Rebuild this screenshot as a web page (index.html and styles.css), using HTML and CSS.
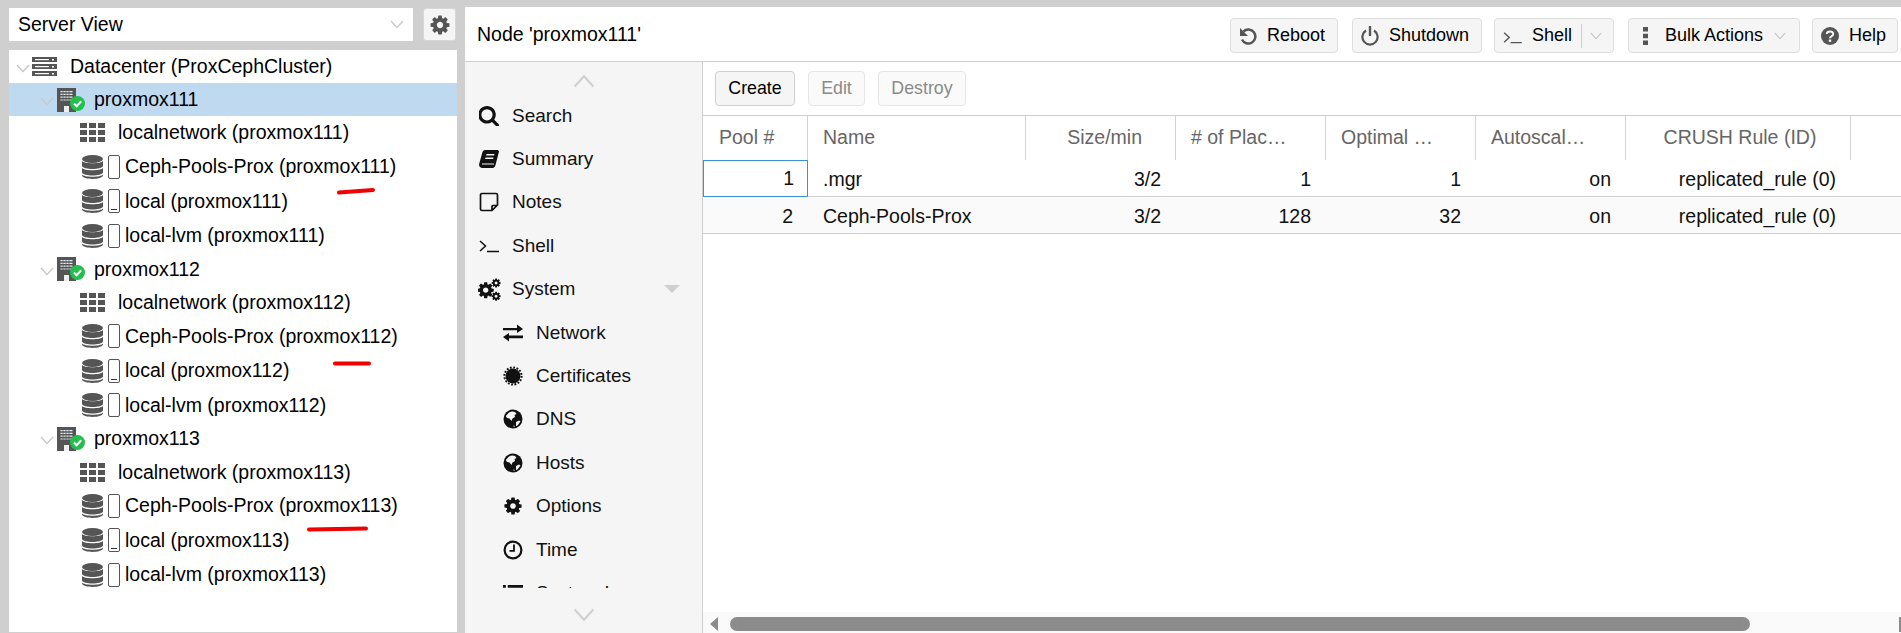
FILE: index.html
```html
<!DOCTYPE html>
<html lang="en">
<head>
<meta charset="utf-8">
<title>Proxmox - Ceph Pools</title>
<link rel="stylesheet" href="styles.css">
</head>
<body>
<svg class="defs" width="0" height="0" aria-hidden="true">
  <symbol id="i-chev" viewBox="0 0 14 9"><path d="M1 1l6 6.5L13 1" fill="none" stroke="currentColor" stroke-width="1.3"/></symbol>
  <symbol id="i-gear" viewBox="0 0 1792 1792"><path fill="currentColor" d="M1152 896q0-106-75-181t-181-75-181 75-75 181 75 181 181 75 181-75 75-181zm512-109v222q0 12-8 23t-20 13l-185 28q-19 54-39 91 35 50 107 138 10 12 10 25t-9 23q-27 37-99 108t-94 71q-12 0-26-9l-138-108q-44 23-91 38-16 136-29 186-7 28-36 28h-222q-14 0-24.5-8.5t-11.5-21.5l-28-184q-49-16-90-37l-141 107q-10 9-25 9-14 0-25-11-126-114-165-168-7-10-7-23 0-12 8-23 15-21 51-66.5t54-70.5q-27-50-41-99l-183-27q-13-2-21-12.5t-8-23.5v-222q0-12 8-23t19-13l186-28q14-46 39-92-40-57-107-138-10-12-10-24 0-10 9-23 26-36 98.5-107.5t94.5-71.5q13 0 26 10l138 107q44-23 91-38 16-136 29-186 7-28 36-28h222q14 0 24.5 8.5t11.5 21.5l28 184q49 16 90 37l142-107q9-9 24-9 13 0 25 10 129 119 165 170 7 8 7 22 0 12-8 23-15 21-51 66.5t-54 70.5q26 50 41 98l183 28q13 2 21 12.5t8 23.5z"/></symbol>
  <symbol id="i-search" viewBox="128 128 1600 1600"><path fill="currentColor" d="M1216 832q0-185-131.5-316.5t-316.5-131.5-316.5 131.5-131.5 316.5 131.5 316.5 316.5 131.5 316.5-131.5 131.5-316.5zm512 832q0 52-38 90t-90 38q-54 0-90-38l-343-342q-179 124-399 124-143 0-273.5-55.5t-225-150-150-225-55.5-273.5 55.5-273.5 150-225 225-150 273.5-55.5 273.5 55.5 225 150 150 225 55.5 273.5q0 220-124 399l343 343q37 37 37 90z"/></symbol>
  <symbol id="i-dc" viewBox="0 0 25 19">
    <rect x="0" y="0" width="25" height="5" fill="#555"/><rect x="0" y="7" width="25" height="5" fill="#555"/><rect x="0" y="14" width="25" height="5" fill="#555"/>
    <rect x="3" y="2" width="14" height="1.2" fill="#fff"/><rect x="3" y="9" width="14" height="1.2" fill="#fff"/><rect x="3" y="16" width="14" height="1.2" fill="#fff"/>
    <rect x="20" y="2" width="2" height="1.5" fill="#fff"/><rect x="20" y="9" width="2" height="1.5" fill="#fff"/><rect x="20" y="16" width="2" height="1.5" fill="#fff"/>
  </symbol>
  <symbol id="i-node" viewBox="0 0 28 24">
    <rect x="0" y="0" width="19" height="24" fill="#555"/>
    <path d="M3.500 3h12v1.200h-12zM3.500 5.800h12V7h-12zM3.500 8.600h12v1.200h-12zM3.500 11.400h12v1.200h-12z" fill="#e2ebf3"/>
    <path d="M6 2.500v11M9 2.500v11M12 2.500v11" stroke="#555" stroke-width=".7"/>
    <rect x="7" y="18" width="5" height="6" fill="#eee"/>
    <circle cx="20.500" cy="15.500" r="7.500" fill="#21bf4b"/>
    <path d="M17 15.500l2.600 2.700 4.600-5" fill="none" stroke="#fff" stroke-width="2"/>
  </symbol>
  <symbol id="i-grid" viewBox="0 0 25 19">
    <path fill="#555" d="M0 0h7v5H0zM9 0h7v5H9zM18 0h7v5h-7zM0 7h7v5H0zM9 7h7v5H9zM18 7h7v5h-7zM0 14h7v5H0zM9 14h7v5H9zM18 14h7v5h-7z"/>
  </symbol>
  <symbol id="i-db" viewBox="0 0 21 24">
    <ellipse cx="10.500" cy="4" rx="10.500" ry="4" fill="#555"/>
    <path fill="#555" d="M0 6c2 3 19 3 21 0v5c-1 4-20 4-21 0zM0 13c2 3 19 3 21 0v4.500c-1 4-20 4-21 0zM0 19.500c2 3 19 3 21 0v1c-1 4.500-20 4.500-21 0z"/>
  </symbol>
  <symbol id="i-book" viewBox="0 0 20 20"><path fill="currentColor" d="M6 1h13l1 1.500L16.500 16c-.3 1.500-1.200 3-3 3H3.500C1.500 19 0 17.500 0 15.500L3.500 3C4 1.800 5 1 6 1zM7.500 5l-.4 1.500h8l.4-1.500zM6.500 8.500l-.4 1.500h8l.4-1.500z"/><path d="M3 15h12" stroke="#f5f5f5" stroke-width="1"/></symbol>
  <symbol id="i-note" viewBox="0 0 20 20"><path d="M3 1.500h14a1.500 1.500 0 0 1 1.500 1.500v10l-5.500 5.500H3A1.500 1.500 0 0 1 1.500 17V3A1.500 1.500 0 0 1 3 1.500zM13 18.500v-4a1 1 0 0 1 1-1h4.500" fill="none" stroke="currentColor" stroke-width="1.700"/></symbol>
  <symbol id="i-shell" viewBox="0 0 20 14"><path d="M1 2l5.500 5L1 12M8 12.500h12" fill="none" stroke="currentColor" stroke-width="1.500"/></symbol>
  <symbol id="i-gears" viewBox="0 0 1792 1792"><use href="#i-gear" x="-130" y="220" width="1460" height="1460"/><use href="#i-gear" x="1000" y="-20" width="820" height="820"/><use href="#i-gear" x="1000" y="1010" width="820" height="820"/></symbol>
  <symbol id="i-net" viewBox="0 0 20 17"><path fill="currentColor" d="M0 3.500h14V0l6 4.500L14 8.500V5.700H0zM20 11H6V8.500L0 12.500 6 17v-3.300h14z"/></symbol>
  <symbol id="i-cert" viewBox="0 0 20 20"><circle cx="10" cy="10" r="7.500" fill="currentColor"/><circle cx="10" cy="10" r="8.600" fill="none" stroke="currentColor" stroke-width="2" stroke-dasharray="1.800 1.577"/></symbol>
  <symbol id="i-globe" viewBox="0 0 20 20"><circle cx="10" cy="10" r="9.500" fill="currentColor"/><path fill="#f5f5f5" d="M6 3.500c2-1.200 4-1.300 6-.5l1.500 2-2 1 .5 2-2.500 1.500-1 2.500-2-2.500-2.500-.5L2.800 7zM13 13l3-1.500 1.500 1-3 4-1.500.5zM10 16.500l2 .5-1 1z"/></symbol>
  <symbol id="i-clock" viewBox="0 0 20 20"><circle cx="10" cy="10" r="8.400" fill="none" stroke="currentColor" stroke-width="2.200"/><path d="M11 4.500v6.300H6.500" fill="none" stroke="currentColor" stroke-width="1.800"/></symbol>
  <symbol id="i-list" viewBox="0 0 21 17"><path fill="currentColor" d="M0 0h3v3H0zM5 0h16v3H5zM0 6h3v3H0zM5 6h16v3H5zM0 12h3v3H0zM5 12h16v3H5z"/></symbol>
  <symbol id="i-undo" viewBox="0 0 18 18"><path d="M4.500 4.500A7 7 0 1 1 3 12.500" fill="none" stroke="currentColor" stroke-width="2.500"/><path d="M1 1v8h8z" fill="currentColor"/></symbol>
  <symbol id="i-power" viewBox="0 0 18 20"><path d="M5 4.500a7.600 7.600 0 1 0 8 0" fill="none" stroke="currentColor" stroke-width="2.200"/><path d="M9 0v10" stroke="currentColor" stroke-width="2.400"/></symbol>
  <symbol id="i-dots" viewBox="0 0 5 18"><path fill="currentColor" d="M0 0h5v4.500H0zM0 6.800h5v4.500H0zM0 13.500h5V18H0z"/></symbol>
  <symbol id="i-help" viewBox="0 0 18 18"><circle cx="9" cy="9" r="9" fill="currentColor"/><path d="M5.800 7c.2-3.400 6.400-3.400 6.400 0 0 2.300-3.200 2.200-3.200 4.300" fill="none" stroke="#f5f5f5" stroke-width="2"/><rect x="7.800" y="12.500" width="2.400" height="2.400" fill="#f5f5f5"/></symbol>
</svg>

<div class="app">
  <aside class="left">
    <div class="left-top">
      <div class="view-select">
        <span>Server View</span>
        <svg class="chev sel-chev"><use href="#i-chev"/></svg>
      </div>
      <button class="gear-btn" type="button" aria-label="Settings"><svg class="gear-icon"><use href="#i-gear"/></svg></button>
    </div>
    <div class="tree">
      <div class="row lv0"><svg class="chev"><use href="#i-chev"/></svg><svg class="ic-dc"><use href="#i-dc"/></svg><span>Datacenter (ProxCephCluster)</span></div>

      <div class="row lv1 selected"><svg class="chev"><use href="#i-chev"/></svg><svg class="ic-node"><use href="#i-node"/></svg><span>proxmox111</span></div>
      <div class="row lv2"><svg class="ic-grid"><use href="#i-grid"/></svg><span>localnetwork (proxmox111)</span></div>
      <div class="row lv2 st"><svg class="ic-db"><use href="#i-db"/></svg><i class="tofu"></i><span>Ceph-Pools-Prox (proxmox111)</span></div>
      <div class="row lv2 st"><svg class="ic-db"><use href="#i-db"/></svg><i class="tofu"><b></b></i><span>local (proxmox111)</span></div>
      <div class="row lv2 st"><svg class="ic-db"><use href="#i-db"/></svg><i class="tofu"></i><span>local-lvm (proxmox111)</span></div>

      <div class="row lv1"><svg class="chev"><use href="#i-chev"/></svg><svg class="ic-node"><use href="#i-node"/></svg><span>proxmox112</span></div>
      <div class="row lv2"><svg class="ic-grid"><use href="#i-grid"/></svg><span>localnetwork (proxmox112)</span></div>
      <div class="row lv2 st"><svg class="ic-db"><use href="#i-db"/></svg><i class="tofu"></i><span>Ceph-Pools-Prox (proxmox112)</span></div>
      <div class="row lv2 st"><svg class="ic-db"><use href="#i-db"/></svg><i class="tofu"><b></b></i><span>local (proxmox112)</span></div>
      <div class="row lv2 st"><svg class="ic-db"><use href="#i-db"/></svg><i class="tofu"></i><span>local-lvm (proxmox112)</span></div>

      <div class="row lv1"><svg class="chev"><use href="#i-chev"/></svg><svg class="ic-node"><use href="#i-node"/></svg><span>proxmox113</span></div>
      <div class="row lv2"><svg class="ic-grid"><use href="#i-grid"/></svg><span>localnetwork (proxmox113)</span></div>
      <div class="row lv2 st"><svg class="ic-db"><use href="#i-db"/></svg><i class="tofu"></i><span>Ceph-Pools-Prox (proxmox113)</span></div>
      <div class="row lv2 st"><svg class="ic-db"><use href="#i-db"/></svg><i class="tofu"><b></b></i><span>local (proxmox113)</span></div>
      <div class="row lv2 st"><svg class="ic-db"><use href="#i-db"/></svg><i class="tofu"></i><span>local-lvm (proxmox113)</span></div>
    </div>
  </aside>

  <main class="main">
    <header class="head">
      <div class="title">Node 'proxmox111'</div>
      <div class="actions">
        <button class="btn w-reboot" type="button"><svg class="b-ic"><use href="#i-undo"/></svg>Reboot</button>
        <button class="btn w-shut" type="button"><svg class="b-ic b-power"><use href="#i-power"/></svg>Shutdown</button>
        <button class="btn w-shell" type="button"><svg class="b-ic-w"><use href="#i-shell"/></svg>Shell<i class="split"></i><svg class="chev b-chev"><use href="#i-chev"/></svg></button>
        <button class="btn w-bulk" type="button"><svg class="b-dots"><use href="#i-dots"/></svg>Bulk Actions<svg class="chev b-chev"><use href="#i-chev"/></svg></button>
        <button class="btn w-help" type="button"><svg class="b-ic"><use href="#i-help"/></svg>Help</button>
      </div>
    </header>

    <div class="body">
      <nav class="nav">
        <div class="nav-arrow up"><svg class="big-chev"><use href="#i-chev"/></svg></div>
        <div class="nav-list">
          <div class="nav-item"><svg class="n-ic"><use href="#i-search"/></svg>Search</div>
          <div class="nav-item"><svg class="n-ic"><use href="#i-book"/></svg>Summary</div>
          <div class="nav-item"><svg class="n-ic"><use href="#i-note"/></svg>Notes</div>
          <div class="nav-item"><svg class="n-ic shell-ic"><use href="#i-shell"/></svg>Shell</div>
          <div class="nav-item"><svg class="n-ic gears-ic"><use href="#i-gears"/></svg>System<i class="caret"></i></div>
          <div class="nav-item sub"><svg class="n-ic"><use href="#i-net"/></svg>Network</div>
          <div class="nav-item sub"><svg class="n-ic"><use href="#i-cert"/></svg>Certificates</div>
          <div class="nav-item sub"><svg class="n-ic"><use href="#i-globe"/></svg>DNS</div>
          <div class="nav-item sub"><svg class="n-ic"><use href="#i-globe"/></svg>Hosts</div>
          <div class="nav-item sub"><svg class="n-ic"><use href="#i-gear"/></svg>Options</div>
          <div class="nav-item sub"><svg class="n-ic"><use href="#i-clock"/></svg>Time</div>
          <div class="nav-item sub"><svg class="n-ic"><use href="#i-list"/></svg>System Log</div>
        </div>
        <div class="nav-arrow down"><svg class="big-chev"><use href="#i-chev"/></svg></div>
      </nav>

      <section class="content">
        <div class="toolbar">
          <button class="tbtn w-create" type="button">Create</button>
          <button class="tbtn off w-edit" type="button">Edit</button>
          <button class="tbtn off w-destroy" type="button">Destroy</button>
        </div>
        <div class="grid-head cols">
          <div class="hc">Pool #</div>
          <div class="hc">Name</div>
          <div class="hc hc-size">Size/min</div>
          <div class="hc">#&nbsp;of&nbsp;Plac…</div>
          <div class="hc">Optimal&nbsp;…</div>
          <div class="hc">Autoscal…</div>
          <div class="hc hc-center">CRUSH Rule (ID)</div>
          <div class="hc"></div>
        </div>
        <div class="grid-row cols">
          <div class="c r focus">1</div><div class="c">.mgr</div><div class="c r">3/2</div><div class="c r">1</div><div class="c r">1</div><div class="c r">on</div><div class="c r">replicated_rule (0)</div><div class="c"></div>
        </div>
        <div class="grid-row alt cols">
          <div class="c r">2</div><div class="c">Ceph-Pools-Prox</div><div class="c r">3/2</div><div class="c r">128</div><div class="c r">32</div><div class="c r">on</div><div class="c r">replicated_rule (0)</div><div class="c"></div>
        </div>
        <div class="grid-fill"></div>
        <div class="hscroll">
          <i class="arrow-l"></i>
          <div class="thumb"></div>
          <i class="arrow-r"></i>
        </div>
      </section>
    </div>
  </main>
</div>

<svg class="marks" width="1901" height="633" aria-hidden="true">
  <path d="M339 192.500L373 190" />
  <path d="M335 363.500H369" />
  <path d="M309 529.500L366 528.500" />
</svg>
</body>
</html>
```
FILE: styles.css
```css
* { box-sizing: border-box; }
html, body { margin: 0; height: 100%; }
body {
  position: relative;
  height: 633px;
  overflow: hidden;
  background: #cfcfcf;
  color: #000;
  font-family: "Liberation Sans", Arial, sans-serif;
  font-size: 19.5px;
}
svg { display: block; flex: none; }
.defs { position: absolute; }
button { font: inherit; color: inherit; margin: 0; cursor: default; }

.app { display: flex; height: 633px; }

/* left column */
.left { width: 465px; flex: none; padding: 8px 8px 0 9px; display: flex; flex-direction: column; }
.left-top { display: flex; height: 33px; padding-right: 1px; }
.view-select {
  width: 404px; background: #fff; display: flex; align-items: center;
  padding: 0 9px 0 9px; justify-content: space-between;
}
.chev { width: 14px; height: 9px; color: #c8c8c8; }
.sel-chev { margin-top: -1px; }
.gear-btn {
  margin-left: 10px; width: 33px; height: 33px; padding: 0;
  background: #f5f5f5; border: 1px solid #d8d8d8; border-radius: 3px;
  display: flex; align-items: center; justify-content: center;
}
.gear-icon { width: 22px; height: 22px; color: #555; }

.tree { margin-top: 9px; height: 582px; background: #fff; }
.row { display: flex; align-items: center; height: 33.2px; white-space: nowrap; }
.row.st { height: 34.4px; }
.selected { background: #bfdaf0; }
.lv0 { padding-left: 7px; }
.lv0 .chev { margin-top: 4px; }
.ic-dc { width: 25px; height: 19px; margin: 0 13px 0 2px; }
.lv1 { padding-left: 31px; }
.lv1 .chev { margin-top: 4px; }
.ic-node { width: 28px; height: 24px; margin: 0 9px 0 3px; }
.lv2 { padding-left: 71px; }
.ic-grid { width: 25px; height: 19px; margin-right: 13px; }
.ic-db { width: 21px; height: 24px; margin: 0 5px 0 2px; }
.tofu {
  position: relative; flex: none; width: 12px; height: 24px; margin-right: 5px;
  border: 1px solid #555; border-radius: 2px; background: #fff;
}
.tofu b { position: absolute; left: 2px; right: 2px; bottom: 2px; height: 1px; background: #333; }

/* main panel */
.main { flex: 1; min-width: 0; margin-top: 7px; background: #fff; display: flex; flex-direction: column; }
.head {
  height: 55px; flex: none; display: flex; align-items: center; justify-content: space-between;
  padding: 0 3px 0 12px; border-bottom: 1px solid #cfcfcf;
}
.actions { display: flex; margin-top: 3px; }
.btn {
  height: 35px; padding: 0 0 0 8px; display: flex; align-items: center; white-space: nowrap;
  background: #f5f5f5; border: 1px solid #dedede; border-radius: 4px; font-size: 18px;
}
.w-reboot { width: 108px; }
.w-shut { width: 130px; margin-left: 14px; }
.w-shell { width: 120px; margin-left: 12px; }
.w-bulk { width: 172px; margin-left: 14px; padding-left: 14px; }
.w-help { width: 86px; margin-left: 12px; }
.b-ic { width: 18px; height: 18px; margin-right: 10px; color: #555; }
.b-power { height: 20px; }
.b-ic-w { width: 19px; height: 13px; margin-right: 10px; color: #555; margin-top: 3px; }
.b-dots { width: 5px; height: 18px; margin-right: 17px; color: #555; }
.b-chev { width: 12px; height: 8px; margin-left: 11px; color: #c8c8c8; }
.split { width: 1px; height: 24px; background: #d0d0d0; margin-left: 9px; }
.split + .b-chev { margin-left: 8px; }

.body { flex: 1; min-height: 0; display: flex; }
.nav {
  width: 238px; flex: none; background: #f5f5f5; border-right: 1px solid #cfcfcf;
  display: flex; flex-direction: column;
}
.nav-arrow { flex: none; display: flex; justify-content: center; }
.up { height: 32px; padding-top: 12px; }
.up .big-chev { transform: scaleY(-1); }
.down { height: 45px; padding-top: 20px; }
.big-chev { width: 24px; height: 14px; color: #cfcfcf; }
.nav-list { flex: 1; min-height: 0; overflow: hidden; }
.nav-item {
  height: 43.4px; display: flex; align-items: center; white-space: nowrap;
  padding-left: 14px; font-size: 19px; color: #111;
}
.nav-item.sub { padding-left: 38px; }
.n-ic { width: 20px; height: 20px; margin-right: 13px; color: #111; }
.shell-ic { height: 14px; }
.gears-ic { width: 23px; height: 23px; margin: 0 11px 0 -1px; }
.caret {
  margin-left: auto; margin-right: 22px; width: 0; height: 0;
  border-left: 8px solid transparent; border-right: 8px solid transparent; border-top: 8px solid #cfcfcf;
}

.content { flex: 1; min-width: 0; display: flex; flex-direction: column; }
.toolbar { height: 54px; flex: none; display: flex; align-items: center; padding: 0 0 0 12px; gap: 13px; border-bottom: 1px solid #cfcfcf; }
.tbtn { height: 35px; padding: 0; background: #f5f5f5; border: 1px solid #cfcfcf; border-radius: 4px; font-size: 17.8px; }
.tbtn.off { color: #8a8a8a; background: #fafafa; border-color: #e6e6e6; }
.w-create { width: 80px; }
.w-edit { width: 57px; }
.w-destroy { width: 88px; }

.cols { display: grid; grid-template-columns: 105px 218px 150px 150px 150px 150px 225px 1fr; }
.grid-head { height: 44px; flex: none; color: #666; }
.hc {
  padding: 0 0 0 15px; line-height: 42px; white-space: nowrap; overflow: hidden;
  border-right: 1px solid #d4d4d4;
}
.hc:first-child { padding-left: 16px; }
.hc:last-child { border-right: none; }
.hc-size { text-align: right; padding-right: 33px; }
.hc-center { text-align: center; padding: 0 0 0 4px; }
.grid-row { height: 37px; flex: none; border-bottom: 1px solid #cfcfcf; color: #111; }
.alt { background: #fafafa; }
.c { padding: 2px 15px 0; line-height: 35px; white-space: nowrap; }
.c.r { text-align: right; }
.focus { border: 1px solid #3892d4; padding: 1px 13px 0 15px; line-height: 33px; }
.grid-fill { flex: 1; min-height: 0; }

.hscroll { height: 21px; flex: none; background: #fafafa; display: flex; align-items: center; padding: 3px 0 0 7px; }
.arrow-l { width: 0; height: 0; border-top: 7.5px solid transparent; border-bottom: 7.5px solid transparent; border-right: 8px solid #8c8c8c; }
.thumb { width: 1020px; height: 14px; margin-left: 12px; border-radius: 7px; background: #8c8c8c; }
.arrow-r { margin-left: auto; width: 2px; height: 15px; background: #8c8c8c; }

/* red pen marks drawn over the screenshot */
.marks { position: absolute; left: 0; top: 0; pointer-events: none; fill: none; stroke: #f00000; stroke-width: 4; stroke-linecap: round; }
```
